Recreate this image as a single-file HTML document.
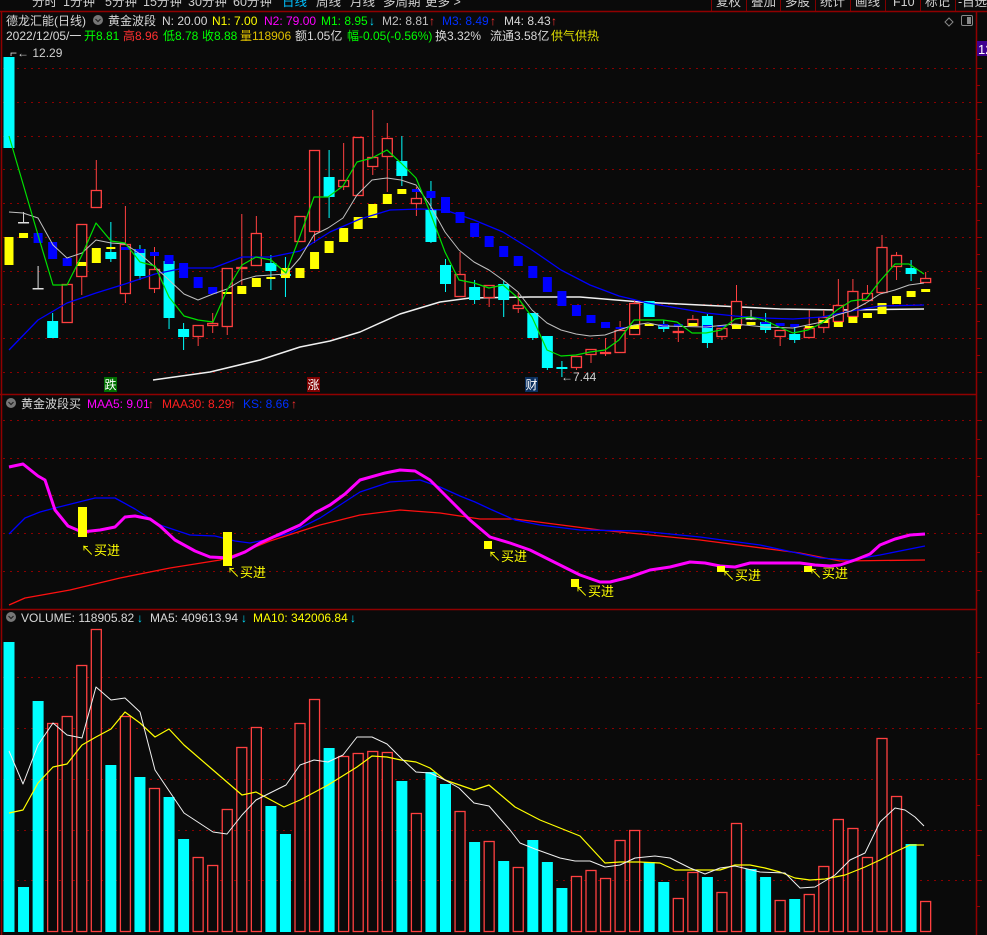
<!DOCTYPE html>
<html><head><meta charset="utf-8">
<style>
html,body{margin:0;padding:0;background:#0a0a0a;width:987px;height:935px;overflow:hidden}
svg{display:block}
text{font-family:"Liberation Sans","Noto Sans CJK SC",sans-serif}
</style></head>
<body>
<svg id="s" width="987" height="935" xmlns="http://www.w3.org/2000/svg">
<rect width="987" height="935" fill="#0a0a0a"/>
<g font-size="12.5" fill="#d0d0d0">
<text x="32" y="6">分时</text><text x="63" y="6">1分钟</text><text x="105" y="6">5分钟</text><text x="143" y="6">15分钟</text><text x="188" y="6">30分钟</text><text x="233" y="6">60分钟</text>
<text x="282" y="6" fill="#00c0ff">日线</text><text x="316" y="6">周线</text><text x="350" y="6">月线</text><text x="383" y="6">多周期</text><text x="425" y="6">更多 &gt;</text>
<text x="716" y="6">复权</text><text x="751" y="6">叠加</text><text x="785" y="6">多股</text><text x="820" y="6">统计</text><text x="855" y="6">画线</text><text x="893" y="6">F10</text><text x="925" y="6">标记</text><text x="958" y="6">-自选</text>
</g>
<g stroke="#800000" stroke-width="1">
<line x1="711.5" y1="0" x2="711.5" y2="11"/><line x1="746.5" y1="0" x2="746.5" y2="11"/><line x1="780.5" y1="0" x2="780.5" y2="11"/><line x1="815.5" y1="0" x2="815.5" y2="11"/><line x1="850.5" y1="0" x2="850.5" y2="11"/><line x1="885.5" y1="0" x2="885.5" y2="11"/><line x1="920.5" y1="0" x2="920.5" y2="11"/><line x1="955.5" y1="0" x2="955.5" y2="11"/>
</g>
<line x1="0" y1="11.5" x2="987" y2="11.5" stroke="#900000" stroke-width="1.5"/>
<g font-size="12">
<text x="6" y="25" fill="#d8d8d8">德龙汇能(日线)</text>
<circle cx="98" cy="20" r="5" fill="#777"/><path d="M95.5 19l2.5 2.5 2.5-2.5" stroke="#222" fill="none" stroke-width="1.2"/>
<text x="108" y="25" fill="#d8d8d8">黄金波段</text>
<text x="162" y="25" fill="#d8d8d8">N: 20.00</text>
<text x="212" y="25" fill="#ffff00">N1: 7.00</text>
<text x="264" y="25" fill="#ff00ff">N2: 79.00</text>
<text x="321" y="25" fill="#00ff00">M1: 8.95</text><text x="369" y="25" fill="#00e0ff">↓</text>
<text x="382" y="25" fill="#c0c0c0">M2: 8.81</text><text x="429" y="25" fill="#ff3030">↑</text>
<text x="442" y="25" fill="#0030ff">M3: 8.49</text><text x="490" y="25" fill="#ff3030">↑</text>
<text x="504" y="25" fill="#d8d8d8">M4: 8.43</text><text x="551" y="25" fill="#ff3030">↑</text>
<text x="6" y="40" fill="#d8d8d8">2022/12/05/一</text>
<text x="84" y="40" fill="#00ff00">开8.81</text>
<text x="123" y="40" fill="#ff3030">高8.96</text>
<text x="163" y="40" fill="#00ff00">低8.78</text>
<text x="202" y="40" fill="#00ff00">收8.88</text>
<text x="240" y="40" fill="#e0c000">量118906</text>
<text x="295" y="40" fill="#d8d8d8">额1.05亿</text>
<text x="347" y="40" fill="#00ff00">幅-0.05(-0.56%)</text>
<text x="435" y="40" fill="#d8d8d8">换3.32%</text>
<text x="490" y="40" fill="#d8d8d8">流通3.58亿</text>
<text x="551" y="40" fill="#e0e000">供气供热</text>
</g>
<path d="M949 18l4 4-4 4-4-4z" stroke="#888" fill="none"/>
<rect x="961.5" y="15.5" width="11" height="10" rx="1.5" stroke="#888" fill="none"/><rect x="967" y="17" width="4" height="7" fill="#888"/>
<g stroke="#900000" stroke-width="1.5" fill="none">
<line x1="1.5" y1="11" x2="1.5" y2="935"/>
<line x1="976.5" y1="11" x2="976.5" y2="935"/>
<line x1="0" y1="394.5" x2="976" y2="394.5"/>
<line x1="0" y1="609.5" x2="976" y2="609.5"/>
</g>
<rect x="977" y="41" width="10" height="15" fill="#400090"/>
<text x="978" y="54" font-size="13" fill="#fff">12</text>
<g id="grid"></g>
<g id="main"></g>
<text x="10" y="57" font-size="12" fill="#d0d0d0">⌐← 12.29</text>
<rect x="104" y="377" width="13" height="15" fill="#007000"/><text x="104.5" y="389" font-size="12" fill="#fff">跌</text>
<rect x="307" y="377" width="13" height="15" fill="#800000"/><text x="307.5" y="389" font-size="12" fill="#fff">涨</text>
<rect x="525" y="377" width="13" height="15" fill="#0a3060"/><text x="525.5" y="389" font-size="12" fill="#fff">财</text>
<text x="561" y="381" font-size="12" fill="#d0d0d0">←7.44</text>
<g font-size="12">
<circle cx="11" cy="403" r="5" fill="#777"/><path d="M8.5 402l2.5 2.5 2.5-2.5" stroke="#222" fill="none" stroke-width="1.2"/>
<text x="21" y="408" fill="#d8d8d8">黄金波段买</text>
<text x="87" y="408" fill="#ff00ff">MAA5: 9.01</text><text x="148" y="408" fill="#ff3030">↑</text>
<text x="162" y="408" fill="#ff2020">MAA30: 8.29</text><text x="230" y="408" fill="#ff3030">↑</text>
<text x="243" y="408" fill="#0030ff">KS: 8.66</text><text x="291" y="408" fill="#ff3030">↑</text>
</g>
<g font-size="13" fill="#ffff00">
<text x="81" y="555">↖买进</text><text x="227" y="577">↖买进</text><text x="488" y="561">↖买进</text>
<text x="575" y="596">↖买进</text><text x="722" y="580">↖买进</text><text x="809" y="578">↖买进</text>
</g>
<g font-size="12">
<circle cx="11" cy="617" r="5" fill="#777"/><path d="M8.5 616l2.5 2.5 2.5-2.5" stroke="#222" fill="none" stroke-width="1.2"/>
<text x="21" y="622" fill="#d8d8d8">VOLUME: 118905.82</text><text x="137" y="622" fill="#00e0ff">↓</text>
<text x="150" y="622" fill="#d8d8d8">MA5: 409613.94</text><text x="241" y="622" fill="#00e0ff">↓</text>
<text x="253" y="622" fill="#ffff00">MA10: 342006.84</text><text x="350" y="622" fill="#00e0ff">↓</text>
</g>
</svg>
<script>
var NS="http://www.w3.org/2000/svg";
function el(p,t,a){var e=document.createElementNS(NS,t);for(var k in a)e.setAttribute(k,a[k]);p.appendChild(e);return e;}
var G=document.getElementById('grid'),M=document.getElementById('main');
[68,102,136,169,203,237,271,304,338,372,420,458,495,533,571,677,728,779,830,880].forEach(function(y){
 el(G,'line',{x1:3,y1:y+.5,x2:976,y2:y+.5,stroke:'#8a0000','stroke-dasharray':'2 5','stroke-width':1});
 el(G,'line',{x1:977,y1:y+.5,x2:982,y2:y+.5,stroke:'#900000','stroke-width':1});
});
[85,119,153,186,220,254,288,321,355,439,476,514,552,590,652,703,754,805,855,906].forEach(function(y){
 el(G,'line',{x1:977,y1:y+.5,x2:980,y2:y+.5,stroke:'#900000','stroke-width':1});
});
function X(i){return 9+i*14.55;}
var C={r:'#ff4040',c:'#00ffff',w:'#e0e0e0'},B={y:'#ffff00',b:'#0000ff'};
var D=[
['c',57,148,57,148,'y',237,265],['w',222,222,212,222,'y',233,238],['w',288,288,266,288,'b',233,243],['c',321,338,313,338,'b',242,259],
['r',284,323,284,323,'b',258,266],['r',224,277,224,295,'y',262,266],['r',190,208,160,208,'y',248,263],['c',252,259,222,262,'y',247,249],
['r',244,294,206,303,'b',247,250],['c',249,276,245,280,'b',249,253],['r',269,289,247,293,'b',252,256],['c',261,318,261,329,'b',255,264],
['c',329,337,323,350,'b',263,278],['r',325,337,325,346,'b',277,288],['r',323,326,313,333,'b',287,294],['r',268,327,268,335,'y',292,294],
['r',267,269,214,285,'y',286,294],['r',233,266,216,266,'y',278,287],['c',263,271,255,290,'y',277,279],['c',274,276,257,297,'y',268,278],
['r',216,242,216,242,'y',268,278],['r',150,232,150,243,'y',252,269],['c',177,197,150,218,'y',241,253],['r',180,187,143,190,'y',228,242],
['r',137,196,137,196,'y',217,229],['r',157,167,110,175,'y',204,218],['r',138,157,123,192,'y',194,204],['c',161,176,136,186,'y',189,194],
['r',198,204,187,216,'b',189,192],['c',209,242,181,243,'b',191,198],['c',265,284,259,292,'b',197,213],['r',274,297,252,297,'b',212,223],
['c',287,300,280,304,'b',223,237],['r',285,298,285,307,'b',236,247],['c',284,300,280,317,'b',246,257],['r',305,309,293,313,'b',256,266],
['c',313,338,313,340,'b',266,278],['c',336,368,336,370,'b',277,292],['c',367,369,361,377,'b',291,306],['r',356,368,356,370,'b',305,316],
['r',349,355,349,363,'b',315,323],['r',352,354,338,356,'b',322,328],['r',330,353,321,353,'b',327,329],['r',303,335,300,335,'y',325,329],
['c',301,317,301,317,'y',324,326],['c',325,329,320,332,'b',324,327],['r',331,333,327,342,'b',324,327],['r',319,326,315,326,'y',323,326],
['c',316,343,314,348,'b',325,328],['r',328,337,328,340,'b',325,327],['r',301,326,285,326,'y',324,329],['w',318,318,310,320,'y',322,325],
['c',322,330,313,333,'b',322,324],['r',330,337,330,346,'b',323,326],['c',334,340,325,343,'b',324,327],['r',328,338,310,338,'y',326,328],
['r',317,328,310,333,'y',320,323],['r',305,322,279,322,'y',322,327],['r',291,317,279,317,'y',317,323],['r',293,301,285,301,'y',313,318],
['r',247,293,235,293,'y',303,314],['r',255,267,252,280,'y',296,304],['c',268,274,260,281,'y',291,297],['r',278,283,272,283,'y',289,292]];
var V=[642,887,701,723,716,665,629,765,716,777,788,797,839,857,865,809,747,727,806,834,723,699,748,756,753,751,752,781,813,772,784,811,842,841,861,867,840,862,888,876,870,878,840,830,862,882,898,872,877,892,823,869,877,900,899,894,866,819,828,857,738,796,844,901];
var VC="cccrrrrcrcrccrrrrrccrrcrrrrcrccrcrcrcccrrrrrccrrcrrccrcrrrrrrrcr";
function pl(pts,col,w){el(M,'polyline',{points:pts.map(function(p){return p.join(',')}).join(' '),fill:'none',stroke:col,'stroke-width':w,'stroke-linejoin':'round'});}
pl([[153,380],[210,372],[260,360],[300,347],[330,341],[360,332],[400,314],[440,302],[470,298],[530,297],[580,297],[640,302],[700,305],[780,309],[840,310],[924,309]],'#f0f0f0',1.5);
D.forEach(function(d,i){var x=X(i),col=C[d[0]];
 el(M,'line',{x1:x,y1:d[3],x2:x,y2:d[4],stroke:col,'stroke-width':1});
 var h=Math.max(d[2]-d[1],1);
 if(d[0]=='r')el(M,'rect',{x:x-5,y:d[1]+.5,width:10,height:Math.max(h-1,1),fill:'#0a0a0a',stroke:col,'stroke-width':1.3});
 else el(M,'rect',{x:x-5.5,y:d[1],width:11,height:Math.max(h,1.5),fill:col});
 el(M,'rect',{x:x-4.5,y:d[6],width:9,height:Math.max(d[7]-d[6],2),fill:B[d[5]]});
});
pl([[9,350],[38,320],[67,303],[96,293],[125,284],[155,274],[184,268],[213,268],[242,257],[271,257],[300,251],[330,232],[360,219],[390,210],[420,209],[445,210],[474,220],[503,232],[532,250],[561,270],[590,285],[619,296],[648,303],[677,308],[706,313],[735,316],[764,318],[793,319],[822,317],[851,311],[880,306],[924,305]],'#0000ff',1.3);
pl([[9,212],[23,213],[38,218],[53,245],[67,258],[82,253],[96,240],[111,243],[125,244],[140,254],[155,267],[169,280],[184,294],[198,300],[213,294],[227,289],[242,280],[256,276],[271,275],[286,274],[300,258],[314,235],[328,228],[343,218],[357,195],[372,180],[387,178],[401,180],[416,185],[430,205],[445,232],[459,250],[474,262],[489,270],[503,280],[518,292],[532,310],[547,323],[561,330],[576,334],[590,336],[605,335],[619,330],[634,325],[648,323],[663,326],[706,327],[735,324],[764,327],[793,328],[822,322],[837,315],[851,311],[866,303],[880,294],[895,290],[909,285],[924,283]],'#c0c0c0',1);
pl([[9,136],[38,235],[53,285],[67,285],[82,255],[96,223],[111,241],[125,243],[140,262],[155,266],[169,297],[184,316],[198,320],[213,322],[227,290],[242,265],[256,257],[271,260],[286,273],[300,236],[314,197],[328,197],[343,186],[357,162],[372,158],[387,150],[401,163],[416,178],[430,212],[445,252],[459,280],[474,283],[489,288],[503,285],[518,298],[532,317],[547,350],[561,356],[576,355],[590,352],[605,350],[619,340],[634,320],[648,320],[663,320],[677,322],[692,333],[706,333],[721,330],[735,319],[750,317],[764,320],[779,327],[793,333],[808,330],[822,323],[837,310],[851,301],[866,299],[880,281],[895,264],[909,264],[924,274]],'#00e000',1.2);
pl([[9,605],[25,598],[70,590],[120,578],[170,568],[220,560],[240,553],[270,541],[320,525],[360,515],[400,510],[440,513],[480,519],[515,519],[600,530],[700,540],[800,553],[840,561],[925,560]],'#ff1010',1.3);
pl([[9,534],[25,518],[40,512],[55,508],[75,503],[95,498],[115,498],[135,509],[160,525],[190,535],[215,536],[235,541],[250,543],[265,540],[290,533],[320,518],[340,505],[360,492],[390,482],[420,480],[440,487],[460,496],[475,502],[490,509],[515,520],[540,525],[580,530],[640,531],[700,537],[760,545],[820,558],[850,560],[880,555],[925,546]],'#0000ff',1.3);
pl([[9,467],[23,464],[38,476],[45,480],[55,510],[68,526],[82,532],[100,530],[115,527],[125,517],[135,516],[150,519],[160,526],[175,540],[195,551],[210,557],[230,558],[245,552],[260,543],[280,534],[300,525],[315,513],[330,505],[345,494],[360,480],[385,473],[400,470],[415,471],[430,480],[450,500],[470,520],[490,537],[510,543],[530,550],[560,565],[580,575],[600,582],[610,582],[630,577],[650,570],[670,567],[690,562],[705,563],[720,566],[735,567],[750,563],[800,563],[815,565],[830,566],[840,565],[855,560],[870,554],[880,545],[895,539],[910,535],[925,534]],'#ff00ff',3);
[[78,507,9,30],[223,532,9,34],[484,541,8,8],[571,579,8,8],[717,566,8,6],[804,566,8,6]].forEach(function(r){el(M,'rect',{x:r[0],y:r[1],width:r[2],height:r[3],fill:'#ffff00'});});
V.forEach(function(t,i){var x=X(i);
 if(VC[i]=='c')el(M,'rect',{x:x-5.5,y:t,width:11,height:932-t,fill:'#00ffff'});
 else el(M,'rect',{x:x-5,y:t+.5,width:10,height:931-t,fill:'#0a0a0a',stroke:'#ff4040','stroke-width':1.3});
});
pl([[9,813],[23,810],[38,783],[53,767],[67,764],[82,745],[96,737],[111,729],[125,712],[140,723],[155,737],[169,729],[184,745],[213,770],[242,795],[256,792],[284,807],[300,800],[328,785],[357,767],[372,756],[387,757],[401,760],[416,762],[430,768],[445,780],[474,790],[489,785],[515,807],[540,820],[560,828],[580,836],[605,863],[620,862],[640,862],[660,863],[675,870],[700,870],[720,870],[735,865],[750,865],[765,868],[780,872],[795,878],[810,880],[825,879],[845,875],[865,867],[880,860],[895,852],[910,845],[924,845]],'#ffff00',1.2);
pl([[9,751],[23,784],[38,745],[53,723],[67,735],[82,738],[96,687],[111,700],[125,698],[140,712],[155,770],[184,813],[213,832],[227,834],[242,815],[256,800],[286,785],[300,765],[314,760],[328,762],[343,755],[357,737],[372,737],[387,744],[401,758],[416,772],[430,773],[445,780],[459,788],[474,803],[489,806],[510,830],[520,843],[535,849],[560,858],[575,861],[590,861],[605,867],[620,865],[635,858],[655,856],[670,858],[690,868],[705,874],[720,868],[735,866],[760,872],[785,873],[800,888],[815,887],[835,875],[850,860],[865,853],[880,822],[895,808],[905,810],[915,817],[924,826]],'#f0f0f0',1);
</script>
</body></html>
